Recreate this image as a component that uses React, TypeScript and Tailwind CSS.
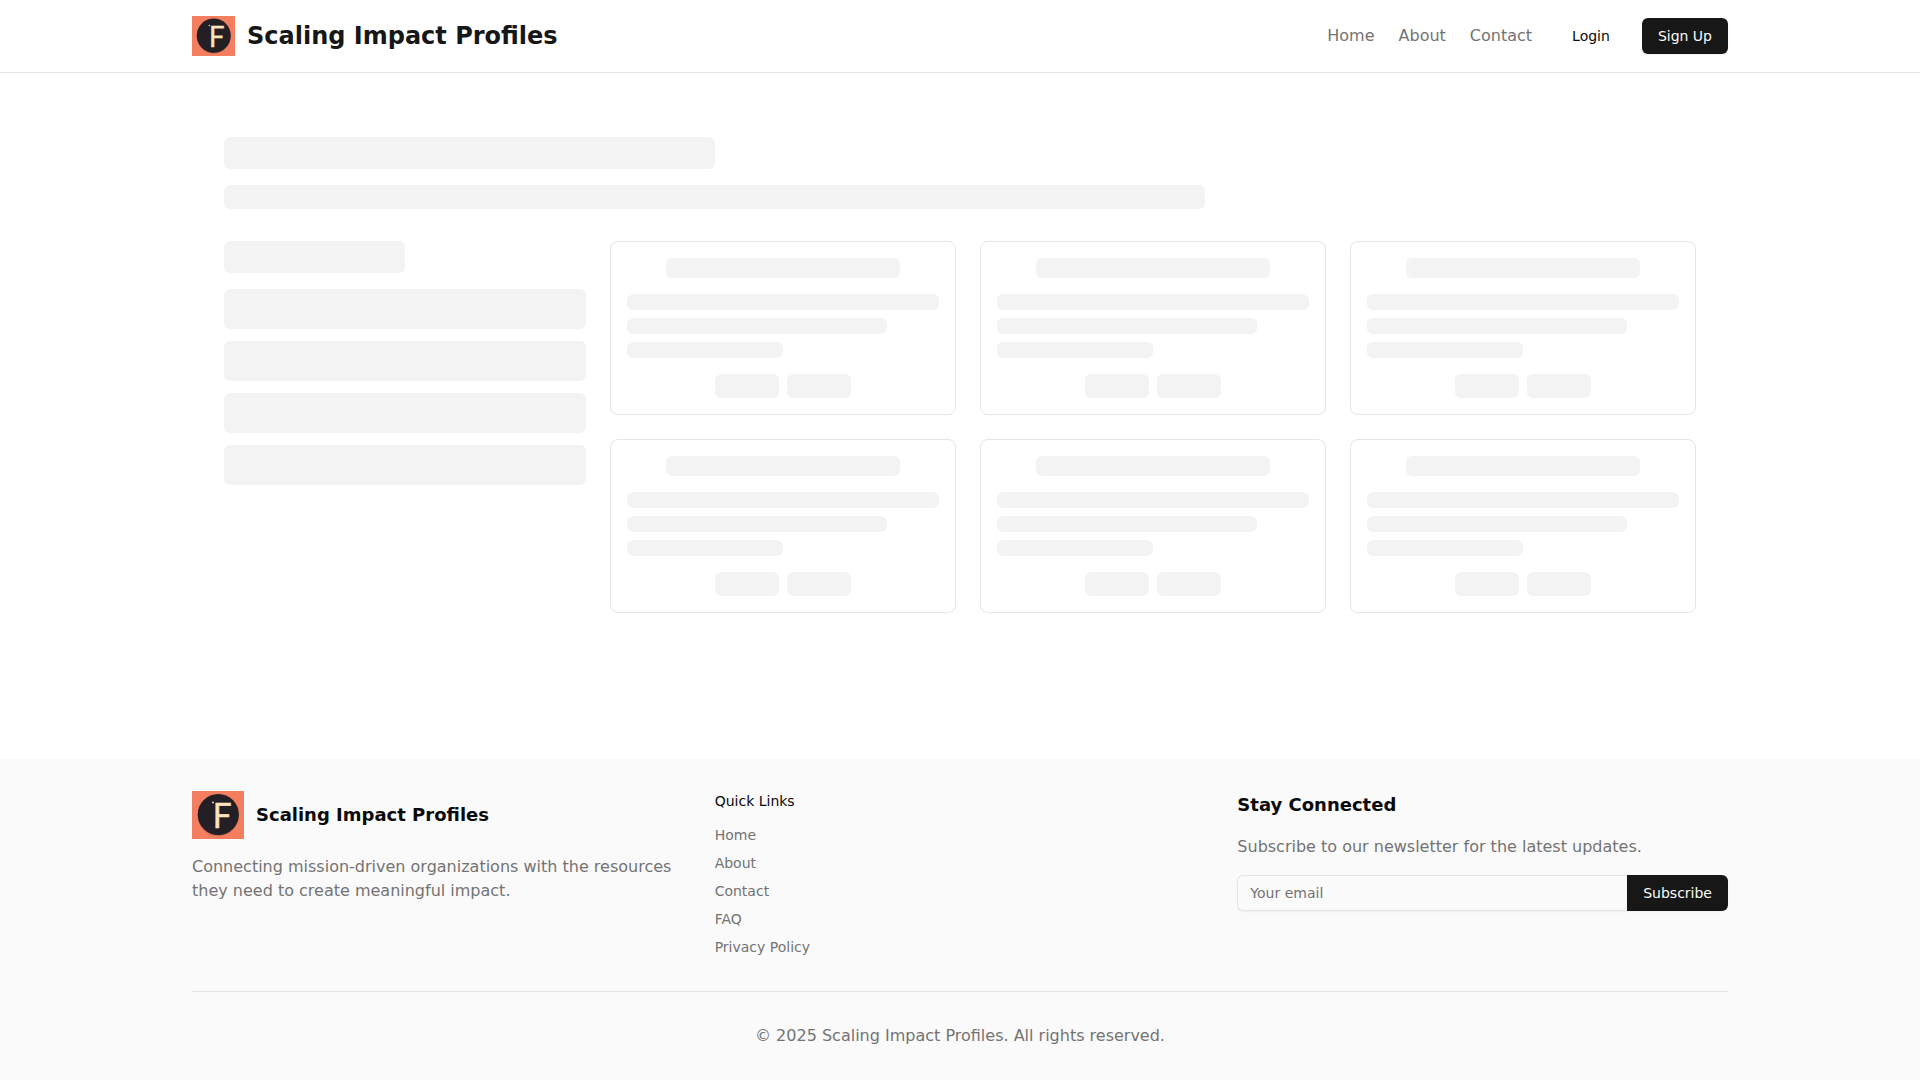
import React, { useState } from 'react';

const navLinks = ['Home', 'About', 'Contact'];
const quickLinks = ['Home', 'About', 'Contact', 'FAQ', 'Privacy Policy'];

const Logo: React.FC<{ className: string }> = ({ className }) => (
  <svg viewBox="0 0 52 48" preserveAspectRatio="none" className={className} aria-hidden="true">
    <defs>
      <radialGradient id="logo-shadow">
        <stop offset="0.85" stopColor="#7a3a2c" stopOpacity="0.8" />
        <stop offset="1" stopColor="#f47f60" stopOpacity="0" />
      </radialGradient>
    </defs>
    <rect width="52" height="48" fill="#f47f60" />
    <circle cx="26.3" cy="25" r="21.5" fill="url(#logo-shadow)" />
    <circle cx="26.3" cy="23.5" r="20.6" fill="#231f25" />
    <circle cx="21" cy="11.4" r="1" fill="#e8d8c4" />
    <text x="20.4" y="36.8" fontSize="34" fill="#fbe3bd" stroke="#fbe3bd" strokeWidth="0.3" fontFamily="Lato, sans-serif">F</text>
  </svg>
);

const Skeleton: React.FC<{ className: string }> = ({ className }) => (
  <div className={`rounded-md bg-[#f3f3f3] ${className}`} />
);

const SkeletonCard: React.FC = () => (
  <div className="rounded-lg border border-[#e5e5e5] p-4">
    <Skeleton className="mx-auto mb-4 h-5 w-3/4" />
    <div className="mb-4 space-y-2">
      <Skeleton className="h-4 w-full" />
      <Skeleton className="h-4 w-5/6" />
      <Skeleton className="h-4 w-1/2" />
    </div>
    <div className="flex justify-center gap-2">
      <Skeleton className="h-6 w-16" />
      <Skeleton className="h-6 w-16" />
    </div>
  </div>
);

const Header: React.FC = () => (
  <header className="border-b border-[#e5e5e5]">
    <div className="mx-auto flex max-w-screen-2xl items-center justify-between py-4">
      <a href="#" className="flex items-center gap-3">
        <Logo className="h-10 w-[43px]" />
        <span className="text-2xl font-bold text-[#171717]">Scaling Impact Profiles</span>
      </a>
      <div className="flex items-center gap-6">
        <nav className="flex items-center gap-6">
          {navLinks.map((link) => (
            <a key={link} href="#" className="text-[#737373] hover:text-[#171717]">{link}</a>
          ))}
        </nav>
        <div className="flex items-center gap-4">
          <button className="h-9 rounded-md px-4 text-sm font-medium">Login</button>
          <button className="h-9 rounded-md bg-[#171717] px-4 text-sm font-medium text-[#fafafa] shadow-xs">
            Sign Up
          </button>
        </div>
      </div>
    </div>
  </header>
);

const Footer: React.FC = () => {
  const [email, setEmail] = useState('');

  return (
    <footer className="bg-[#fafafa] py-8">
      <div className="mx-auto max-w-screen-2xl">
        <div className="grid grid-cols-1 gap-8 md:grid-cols-3">
          <div>
            <a href="#" className="mb-4 flex items-center gap-3">
              <Logo className="h-12 w-[52px]" />
              <span className="text-lg font-bold">Scaling Impact Profiles</span>
            </a>
            <p className="text-[#737373]">
              Connecting mission-driven organizations with the resources they need to create meaningful impact.
            </p>
          </div>

          <div>
            <h3 className="mb-3 text-sm font-medium">Quick Links</h3>
            <ul className="space-y-1">
              {quickLinks.map((link) => (
                <li key={link}>
                  <a href="#" className="text-sm text-[#737373] hover:text-[#171717]">{link}</a>
                </li>
              ))}
            </ul>
          </div>

          <div>
            <h3 className="mb-4 text-lg font-bold">Stay Connected</h3>
            <p className="mb-4 text-[#737373]">Subscribe to our newsletter for the latest updates.</p>
            <form className="flex" onSubmit={(e) => e.preventDefault()}>
              <input
                type="email"
                aria-label="Your email"
                placeholder="Your email"
                value={email}
                onChange={(e) => setEmail(e.target.value)}
                className="h-9 min-w-0 flex-1 rounded-l-md border border-r-0 border-[#e5e5e5] px-3 text-sm shadow-xs placeholder:text-[#737373]"
              />
              <button className="h-9 rounded-r-md bg-[#171717] px-4 text-sm font-medium text-[#fafafa] shadow-xs">
                Subscribe
              </button>
            </form>
          </div>
        </div>

        <div className="mt-8 border-t border-[#e5e5e5] pt-8 text-center text-[#737373]">
          <p>© 2025 Scaling Impact Profiles. All rights reserved.</p>
        </div>
      </div>
    </footer>
  );
};

export default function App() {
  return (
    <div className="flex min-h-screen flex-col bg-white font-['DejaVu_Sans',sans-serif] text-[#0a0a0a]">
      <Header />
      <main className="mx-auto w-full max-w-screen-2xl flex-1 px-8 py-16">
        <Skeleton className="mb-4 h-8 w-1/3" />
        <Skeleton className="mb-8 h-6 w-2/3" />
        <div className="flex gap-6">
          <aside className="w-1/4">
            <Skeleton className="mb-4 h-8 w-1/2" />
            <div className="space-y-3">
              {[...Array(4)].map((_, i) => (
                <Skeleton key={i} className="h-10 w-full" />
              ))}
            </div>
          </aside>
          <section className="grid w-3/4 grid-cols-3 gap-6">
            {[...Array(6)].map((_, i) => (
              <SkeletonCard key={i} />
            ))}
          </section>
        </div>
      </main>
      <Footer />
    </div>
  );
}
